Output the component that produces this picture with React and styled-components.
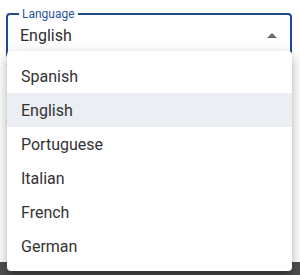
import styled, { createGlobalStyle } from "styled-components";

const languages = ["Spanish", "English", "Portuguese", "Italian", "French", "German"];
const selected = "English";

const GlobalStyle = createGlobalStyle`
  html, body {
    margin: 0;
    padding: 0;
    background: #ffffff;
  }
  body {
    font-family: "Roboto", "Liberation Sans", sans-serif;
    color: #2b2b2b;
  }
`;

const App = () => {
  return (
    <Page>
      <GlobalStyle />
      <Content>
        <Field>
          <Legend>Language</Legend>
          <FieldRow>
            <Value>{selected}</Value>
            <Arrow width="10" height="5" viewBox="0 0 10 5">
              <path d="M0 5 L5 0 L10 5 Z" fill="#6b6b6b" />
            </Arrow>
          </FieldRow>
        </Field>
        <Divider $top={6} />
        <Divider $top={56} />
      </Content>
      <Footer />
      <Menu>
        {languages.map((lang) => (
          <Item key={lang} $active={lang === selected}>
            {lang}
          </Item>
        ))}
      </Menu>
    </Page>
  );
};

const Page = styled.div`
  position: relative;
  width: 300px;
  height: 275px;
  overflow: hidden;
  display: flex;
  flex-direction: column;
  background: #ffffff;
`;

const Content = styled.div`
  flex: 1;
  display: flex;
  flex-direction: column;
  padding: 8px 8px 0 6px;
`;

const Field = styled.fieldset`
  margin: 0;
  padding: 0 12px 0 12px;
  height: 50px;
  border: 2px solid #1f4a8c;
  border-radius: 4px;
  box-sizing: border-box;
`;

const Legend = styled.legend`
  padding: 0 3px;
  margin-left: -1px;
  font-size: 12px;
  line-height: 12px;
  color: #2a5599;
`;

const FieldRow = styled.div`
  display: flex;
  align-items: center;
  height: 26px;
  padding-top: 2px;
`;

const Value = styled.div`
  flex: 1;
  font-size: 16px;
  color: #2e2e2e;
`;

const Arrow = styled.svg`
  display: block;
  margin-right: 1px;
  margin-top: 1px;
`;

const Divider = styled.div`
  height: 1px;
  background: #d0d0d0;
  margin-top: ${(p) => p.$top}px;
`;

const Footer = styled.div`
  height: 13px;
  background: #4f4f4f;
`;

const Menu = styled.ul`
  position: absolute;
  top: 51px;
  left: 7px;
  width: 285px;
  margin: 0;
  padding: 8px 0;
  list-style: none;
  background: #ffffff;
  border-radius: 4px;
  box-shadow: 0px 5px 5px -3px rgba(0, 0, 0, 0.2),
    0px 8px 10px 1px rgba(0, 0, 0, 0.14), 0px 3px 14px 2px rgba(0, 0, 0, 0.12);
`;

const Item = styled.li`
  height: 34px;
  display: flex;
  align-items: center;
  padding: 0 14px;
  font-size: 16px;
  color: #333333;
  background: ${(p) => (p.$active ? "#ebeef3" : "transparent")};
`;

export default App;
